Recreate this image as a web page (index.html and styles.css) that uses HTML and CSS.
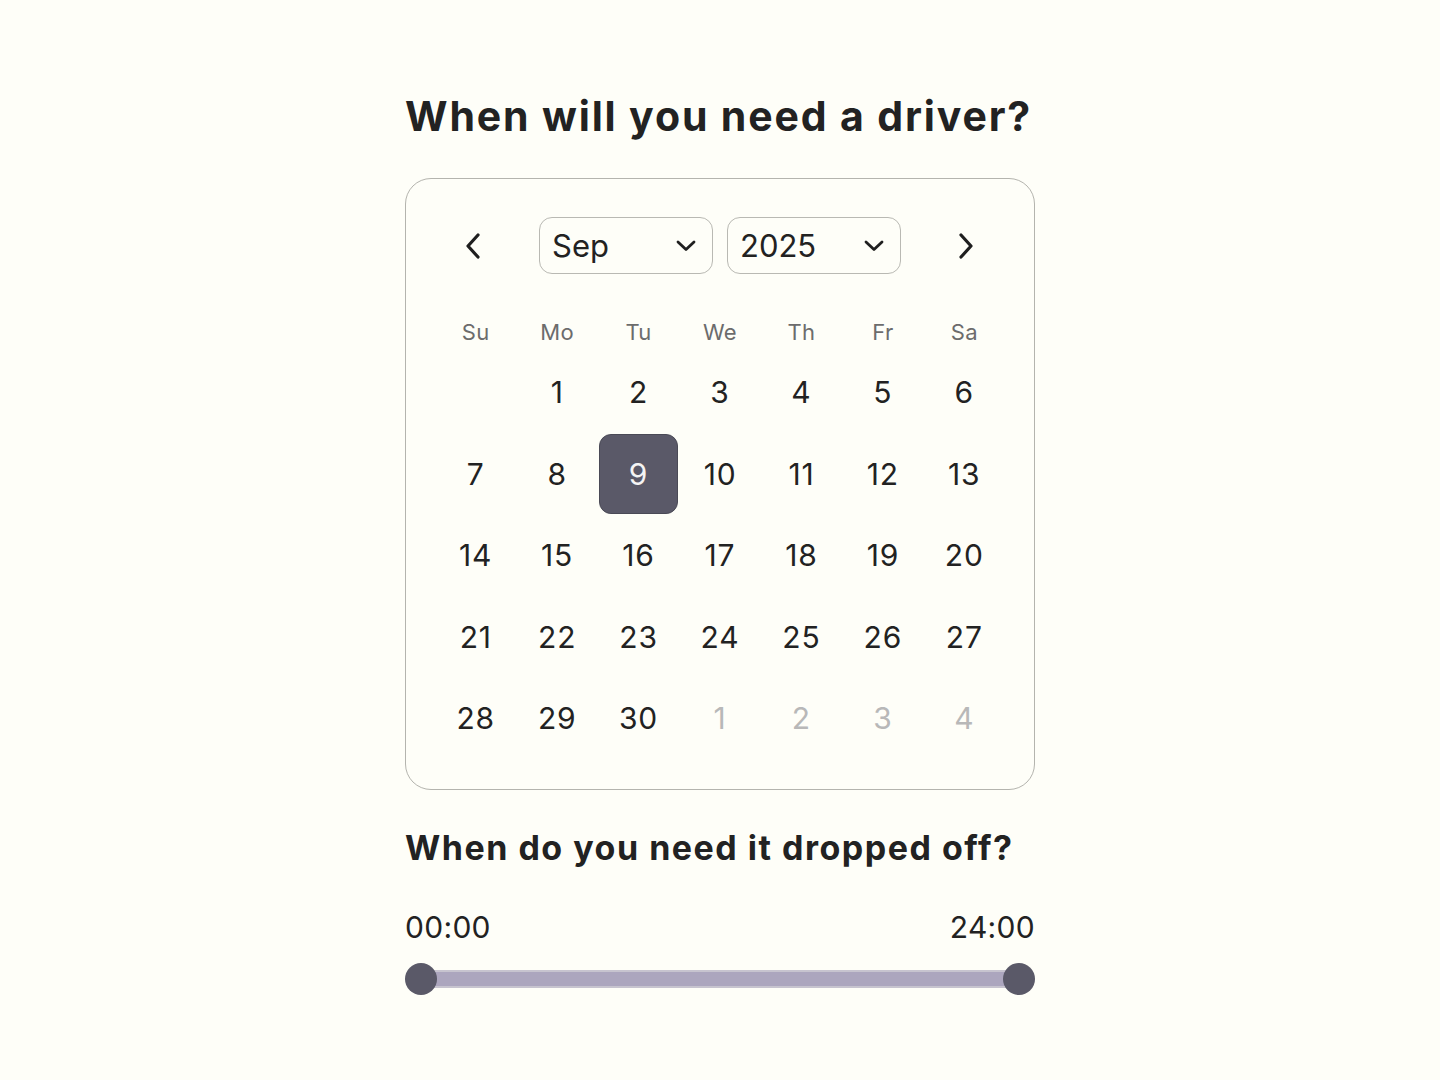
FILE: index.html
```html
<!DOCTYPE html>
<html lang="en">
<head>
<meta charset="utf-8">
<title>When will you need a driver?</title>
<link rel="stylesheet" href="styles.css">
</head>
<body>
<main class="wrap">
  <h1 class="title">When will you need a driver?</h1>
  <section class="card">
    <div class="nav">
      <button class="arrow" aria-label="Previous month">
        <svg width="22" height="28" viewBox="0 0 22 28"><path d="M16 3 L6 14 L16 25" fill="none" stroke="#1f1f1f" stroke-width="3.2" stroke-linecap="round" stroke-linejoin="round"/></svg>
      </button>
      <div class="selects">
        <div class="select"><span>Sep</span>
          <svg width="22" height="14" viewBox="0 0 22 14"><path d="M3 3 L11 10.5 L19 3" fill="none" stroke="#1f1f1f" stroke-width="2.8" stroke-linecap="round" stroke-linejoin="round"/></svg>
        </div>
        <div class="select"><span>2025</span>
          <svg width="22" height="14" viewBox="0 0 22 14"><path d="M3 3 L11 10.5 L19 3" fill="none" stroke="#1f1f1f" stroke-width="2.8" stroke-linecap="round" stroke-linejoin="round"/></svg>
        </div>
      </div>
      <button class="arrow" aria-label="Next month">
        <svg width="22" height="28" viewBox="0 0 22 28"><path d="M6 3 L16 14 L6 25" fill="none" stroke="#1f1f1f" stroke-width="3.2" stroke-linecap="round" stroke-linejoin="round"/></svg>
      </button>
    </div>
    <div class="grid">
      <div class="wd">Su</div><div class="wd">Mo</div><div class="wd">Tu</div><div class="wd">We</div><div class="wd">Th</div><div class="wd">Fr</div><div class="wd">Sa</div>
      <div class="day"></div><div class="day">1</div><div class="day">2</div><div class="day">3</div><div class="day">4</div><div class="day">5</div><div class="day">6</div>
      <div class="day">7</div><div class="day">8</div><div class="day sel">9</div><div class="day">10</div><div class="day">11</div><div class="day">12</div><div class="day">13</div>
      <div class="day">14</div><div class="day">15</div><div class="day">16</div><div class="day">17</div><div class="day">18</div><div class="day">19</div><div class="day">20</div>
      <div class="day">21</div><div class="day">22</div><div class="day">23</div><div class="day">24</div><div class="day">25</div><div class="day">26</div><div class="day">27</div>
      <div class="day">28</div><div class="day">29</div><div class="day">30</div><div class="day out">1</div><div class="day out">2</div><div class="day out">3</div><div class="day out">4</div>
    </div>
  </section>
  <h2 class="subtitle">When do you need it dropped off?</h2>
  <div class="range-labels"><span>00:00</span><span>24:00</span></div>
  <div class="slider">
    <div class="track"></div>
    <div class="thumb thumb-left"></div>
    <div class="thumb thumb-right"></div>
  </div>
</main>
</body>
</html>
```
FILE: styles.css
```css
* { box-sizing: border-box; }
html, body { margin: 0; padding: 0; }
body {
  background: #fefef8;
  font-family: Inter, "Noto Sans", sans-serif;
  color: #222222;
  min-height: 1080px;
}
.wrap {
  width: 630px;
  margin: 0 auto;
  padding-top: 88px;
  display: flex;
  flex-direction: column;
}
.title {
  margin: 0;
  font-size: 41px;
  font-weight: 700;
  line-height: 56px;
  letter-spacing: 1.85px;
  color: #222;
  white-space: nowrap;
}
.card {
  margin-top: 34px;
  border: 1.5px solid #b4b4ae;
  border-radius: 26px;
  padding: 38px 30px 30px;
  background: #fefef8;
}
.nav {
  display: flex;
  align-items: center;
  justify-content: space-between;
}
.selects {
  display: flex;
  gap: 14px;
}
.arrow {
  background: none;
  border: 0;
  padding: 0;
  width: 74px;
  height: 56px;
  display: flex;
  align-items: center;
  justify-content: center;
  cursor: pointer;
}
.nav .arrow:first-child { justify-content: flex-end; padding-right: 26px; }
.nav .arrow:last-child { justify-content: flex-start; padding-left: 25px; }
.select {
  width: 174px;
  height: 57px;
  border: 1.5px solid #b9b9b3;
  border-radius: 13px;
  display: flex;
  align-items: center;
  justify-content: space-between;
  padding: 0 15px 0 12px;
  font-size: 31px;
  color: #222;
}
.select svg { margin-top: 1px; }
.grid {
  margin-top: 39px;
  display: grid;
  grid-template-columns: repeat(7, 1fr);
  grid-auto-rows: 81.5px;
  grid-template-rows: 38.5px;
  column-gap: 2px;
}
.wd {
  display: flex;
  align-items: center;
  justify-content: center;
  font-size: 22px;
  color: #6c6c6c;
  letter-spacing: 0.3px;
}
.day {
  display: flex;
  align-items: center;
  justify-content: center;
  font-size: 30px;
  letter-spacing: 0.8px;
  color: #222;
  margin: 1px 0;
  border-radius: 12px;
}
.day.sel {
  background: #5a5968;
  color: #f4f4f4;
  border: 1px solid #4a4a56;
}
.day.out { color: #b8b8b8; }
.subtitle {
  margin: 36px 0 0;
  font-size: 34px;
  font-weight: 700;
  line-height: 44px;
  letter-spacing: 1.5px;
  color: #222;
  white-space: nowrap;
}
.range-labels {
  margin-top: 39px;
  display: flex;
  justify-content: space-between;
  font-size: 30px;
  line-height: 36px;
  letter-spacing: 0.3px;
  color: #222;
}
.slider {
  position: relative;
  margin-top: 17px;
  height: 34px;
}
.track {
  position: absolute;
  left: 16px;
  right: 16px;
  top: 8px;
  height: 18px;
  background: #aca6be;
  border: 2px solid #c7c4cf;
}
.thumb {
  position: absolute;
  top: 1px;
  width: 32px;
  height: 32px;
  border-radius: 50%;
  background: #5a5968;
}
.thumb-left { left: 0; }
.thumb-right { right: 0; }
```
